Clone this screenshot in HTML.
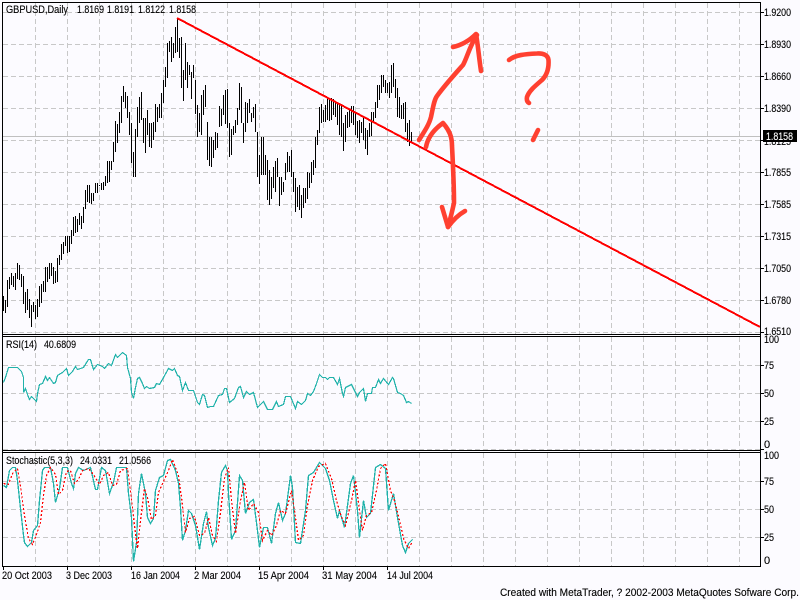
<!DOCTYPE html>
<html>
<head>
<meta charset="utf-8">
<style>
html,body{margin:0;padding:0;width:800px;height:600px;overflow:hidden;background:#fcfbff}
svg{display:block}
text{font-family:"Liberation Sans",sans-serif;font-size:11px;fill:#000;stroke:#000;stroke-width:.12}
.c{shape-rendering:crispEdges;fill:none}
</style>
</head>
<body>
<svg width="800" height="600" viewBox="0 0 800 600" xmlns="http://www.w3.org/2000/svg">
<rect width="800" height="600" fill="#fcfbff"/>

<!-- grid -->
<path class="c" stroke="#c8c8c8" stroke-dasharray="5 3" d="M3 12.5H760M3 44.5H760M3 76.5H760M3 108.5H760M3 140.5H760M3 172.5H760M3 204.5H760M3 236.5H760M3 268.5H760M3 300.5H760M3 332.5H760M3 365.5H760M3 393.5H760M3 421.5H760M3 449.5H760M3 481.5H760M3 509.5H760M3 537.5H760"/>
<path class="c" stroke="#c8c8c8" stroke-dasharray="5 3" d="M35.5 3V334M67.5 3V334M99.5 3V334M131.5 3V334M163.5 3V334M195.5 3V334M227.5 3V334M259.5 3V334M291.5 3V334M323.5 3V334M355.5 3V334M387.5 3V334M419.5 3V334M451.5 3V334M483.5 3V334M515.5 3V334M547.5 3V334M579.5 3V334M611.5 3V334M643.5 3V334M675.5 3V334M707.5 3V334M739.5 3V334
M35.5 337V450M67.5 337V450M99.5 337V450M131.5 337V450M163.5 337V450M195.5 337V450M227.5 337V450M259.5 337V450M291.5 337V450M323.5 337V450M355.5 337V450M387.5 337V450M419.5 337V450M451.5 337V450M483.5 337V450M515.5 337V450M547.5 337V450M579.5 337V450M611.5 337V450M643.5 337V450M675.5 337V450M707.5 337V450M739.5 337V450
M35.5 453V566M67.5 453V566M99.5 453V566M131.5 453V566M163.5 453V566M195.5 453V566M227.5 453V566M259.5 453V566M291.5 453V566M323.5 453V566M355.5 453V566M387.5 453V566M419.5 453V566M451.5 453V566M483.5 453V566M515.5 453V566M547.5 453V566M579.5 453V566M611.5 453V566M643.5 453V566M675.5 453V566M707.5 453V566M739.5 453V566"/>

<!-- current price line -->
<path class="c" stroke="#c0c0c0" d="M3 136.5H760"/>

<!-- price bars -->
<path class="c" stroke="#000" d="M3.5 296V311M5.5 300V313M7.5 280V307M9.5 277V289M11.5 273V285M13.5 276V287M15.5 273V290M17.5 263V279M19.5 265V280M21.5 274V287M23.5 276V304M25.5 292V313M27.5 289V310M29.5 299V318M31.5 305V327M33.5 302V312M35.5 305V319M37.5 299V317M39.5 286V307M41.5 284V303M43.5 281V292M45.5 267V292M47.5 267V282M49.5 263V279M51.5 263V276M53.5 267V284M55.5 271V283M57.5 258V282M59.5 255V265M61.5 244V260M63.5 242V254M65.5 236V246M67.5 236V253M69.5 236V252M71.5 230V244M73.5 217V236M75.5 216V233M77.5 219V232M79.5 213V225M81.5 216V229M83.5 207V223M85.5 190V209M87.5 185V202M89.5 185V203M91.5 193V204M93.5 193V201M95.5 183V193M97.5 183V193M99.5 185V186M101.5 183V190M103.5 182V190M105.5 176V186M107.5 161V183M109.5 161V182M111.5 161V170M113.5 142V162M115.5 121V152M117.5 124V143M119.5 112V133M121.5 96V123M123.5 86V102M125.5 92V108M127.5 96V118M129.5 112V135M131.5 123V163M133.5 152V177M135.5 129V177M137.5 107V137M139.5 97V123M141.5 92V120M143.5 118V143M145.5 118V153M147.5 110V135M149.5 123V147M151.5 123V148M153.5 122V140M155.5 104V132M157.5 107V122M159.5 104V118M161.5 93V118M163.5 80V103M165.5 67V87M167.5 43V78M169.5 41V52M171.5 37V62M173.5 43V58M175.5 27V53M177.5 18V52M179.5 38V58M181.5 37V88M183.5 70V101M185.5 43V80M187.5 62V88M189.5 65V75M191.5 72V99M193.5 65V78M195.5 80V114M197.5 105V137M199.5 113V132M201.5 95V135M203.5 90V115M205.5 85V107M207.5 122V160M209.5 137V166M211.5 137V167M213.5 140V158M215.5 132V150M217.5 133V148M219.5 106V127M221.5 109V126M223.5 95V115M225.5 90V124M227.5 89V128M229.5 123V157M231.5 129V155M233.5 126V135M235.5 120V133M237.5 108V125M239.5 83V110M241.5 87V123M243.5 123V143M245.5 102V132M247.5 103V123M249.5 99V113M251.5 113V122M253.5 107V118M255.5 104V132M257.5 132V177M259.5 155V184M261.5 137V175M263.5 137V175M265.5 155V175M267.5 160V200M269.5 170V205M271.5 177V199M273.5 167V188M275.5 161V192M277.5 158V177M279.5 177V206M281.5 177V195M283.5 182V192M285.5 163V180M287.5 152V172M289.5 156V172M291.5 150V177M293.5 172V192M295.5 178V212M297.5 187V207M299.5 185V210M301.5 195V218M303.5 188V208M305.5 188V203M307.5 172V199M309.5 173V188M311.5 162V183M313.5 160V175M315.5 137V168M317.5 130V145M319.5 107V133M321.5 104V123M323.5 110V122M325.5 105V122M327.5 97V120M329.5 100V121M331.5 98V120M333.5 99V115M335.5 102V117M337.5 103V125M339.5 103V135M341.5 105V137M343.5 123V151M345.5 115V142M347.5 112V128M349.5 110V127M351.5 106V123M353.5 106V125M355.5 113V135M357.5 121V138M359.5 120V143M361.5 122V133M363.5 118V140M365.5 128V149M367.5 130V155M369.5 123V137M371.5 112V136M373.5 112V122M375.5 102V118M377.5 85V108M379.5 85V100M381.5 75V93M383.5 75V87M385.5 80V93M387.5 83V93M389.5 82V98M391.5 65V93M393.5 63V87M395.5 79V98M397.5 88V117M399.5 97V118M401.5 105V119M403.5 103V119M405.5 102V132M407.5 123V142M409.5 120V146M411.5 132V142"/>

<!-- trend line -->
<line x1="177" y1="18" x2="760" y2="327" stroke="#ff0000" stroke-width="2" class="c"/>

<!-- hand drawn -->
<g fill="none" stroke="#ff4030" stroke-width="4.6" stroke-linecap="round" stroke-linejoin="round">
<path d="M419 140C424 132 429 125 431 117C433 108 434 100 437 96C445 85 455 74 463 65C467 58 470 45 477 35"/>
<path d="M453 47C462 45 470 40 476 34C478 45 479 58 481 71"/>
<path d="M426 147C428 136 436 128 443 123C449 130 452 136 452 146C453 165 454 185 454 203C452 212 450 220 448 227"/>
<path d="M442 207L448 227C453 220 458 215 465 211"/>
<path d="M509 60C515 55 525 54 537 53.5C543 53 548 55 548.5 60C549 68 547 75 542 80C535 86 529 91 527 97C526.5 100 527 102 529 103"/>
<path d="M538 130L533 140"/>
</g>

<!-- RSI -->
<polyline class="c" stroke="#20b2aa" stroke-width="1.2" transform="translate(.5 .5)" points="3,382 5,377 8,367 17,367 21,371 23,377 23,392 25,388 27,394 29,399 31,396 33,398 36,401 37,393 39,384 42,383 45,376 47,380 49,377 53,383 55,382 57,375 62,372 66,368 68,375 72,371 75,366 77,369 83,367 88,359 90,359 93,369 97,364 102,366 104,368 108,363 111,365 115,354 117,357 122,352 126,355 127,367 130,378 131,392 133,398 135,387 137,378 139,377 142,383 144,388 146,386 149,388 154,387 156,383 159,384 163,377 168,368 172,370 174,368 177,375 179,376 182,390 185,382 188,390 193,390 197,402 199,404 202,394 204,395 207,407 210,406 213,406 218,395 222,394 224,388 226,388 229,402 234,398 238,387 240,386 243,397 246,391 249,394 253,392 257,407 263,401 267,409 272,409 276,401 278,406 283,404 285,396 290,396 295,408 297,401 301,404 305,400 307,393 310,395 313,391 316,383 319,374 322,377 325,377 327,379 329,377 333,377 337,384 339,378 342,393 343,396 345,387 351,384 357,396 359,392 363,388 365,401 367,393 371,393 372,387 375,387 378,379 380,383 383,378 388,384 392,377 393,378 397,392 400,393 403,395 406,402 408,401 411,403"/>

<!-- Stochastic -->
<polyline class="c" stroke="#20b2aa" stroke-width="1.3" transform="translate(.5 .5)" points="3,485 6,487 9,470 12,467 15,467 17,480 20,508 23,535 24,542 27,546 31,542 33,530 37,525 39,500 42,470 44,467 50,467 53,483 55,502 59,488 62,467 67,467 71,483 73,488 75,473 78,467 83,470 90,467 95,489 97,489 101,467 105,470 109,493 113,482 116,467 126,467 128,493 131,517 133,561 136,542 138,493 141,473 143,483 145,493 147,517 150,523 153,518 155,490 159,477 163,475 167,460 170,459 175,470 178,483 180,507 182,540 185,530 188,510 191,513 195,525 199,549 203,523 206,511 208,527 212,545 215,538 218,500 221,472 225,465 227,470 228,493 231,539 235,530 239,475 242,480 245,513 249,502 253,499 257,530 259,547 263,527 267,527 271,543 275,513 278,502 282,520 285,513 290,475 292,487 295,542 300,543 305,510 308,475 313,472 319,462 325,468 329,480 333,500 337,518 339,510 344,527 350,483 353,475 357,510 359,537 363,500 366,517 370,513 375,467 380,464 385,468 388,510 393,493 397,517 402,545 405,552 408,543 412,539"/>
<polyline class="c" stroke="#ff0000" stroke-width="1.2" stroke-dasharray="2 2" transform="translate(.5 .5)" points="3,483 8,484 12,473 17,468 20,486 24,515 28,538 32,544 36,534 40,522 43,495 46,475 50,467 55,474 58,494 62,490 66,471 70,470 74,483 78,479 82,470 88,468 93,474 99,484 103,475 108,472 112,485 116,484 120,470 127,468 130,490 134,525 137,548 140,520 144,488 147,497 151,519 155,515 158,492 163,481 168,470 172,459 178,475 181,497 185,532 189,518 194,516 199,535 204,533 208,517 212,535 216,541 220,512 224,478 228,467 231,500 235,533 240,500 244,482 248,510 253,503 258,512 262,540 267,530 271,535 276,525 280,510 285,513 291,490 294,510 298,540 303,535 307,505 312,480 318,466 325,463 331,478 336,500 340,514 345,525 351,500 355,480 359,510 362,530 366,515 371,512 376,490 380,468 385,463 390,490 394,500 399,520 403,538 408,548 412,541"/>

<!-- frame -->
<path class="c" stroke="#000" d="M2.5 2V567M2 2.5H761M760.5 2V567M2 334.5H761M2 336.5H761M2 450.5H761M2 452.5H761M2 566.5H761"/>
<!-- right ticks -->
<path class="c" stroke="#000" d="M761 12.5H764M761 44.5H764M761 76.5H764M761 108.5H764M761 140.5H764M761 172.5H764M761 204.5H764M761 236.5H764M761 268.5H764M761 300.5H764M761 332.5H764M761 365.5H764M761 393.5H764M761 421.5H764M761 449.5H764M761 481.5H764M761 509.5H764M761 537.5H764"/>
<!-- bottom ticks -->
<path class="c" stroke="#000" d="M3.5 567V570M67.5 567V570M131.5 567V570M195.5 567V570M259.5 567V570M323.5 567V570M387.5 567V570"/>

<!-- price labels -->
<text x="764" y="16" textLength="27" lengthAdjust="spacingAndGlyphs">1.9200</text>
<text x="764" y="48" textLength="27" lengthAdjust="spacingAndGlyphs">1.8930</text>
<text x="764" y="80" textLength="27" lengthAdjust="spacingAndGlyphs">1.8660</text>
<text x="764" y="112" textLength="27" lengthAdjust="spacingAndGlyphs">1.8390</text>
<text x="764" y="145" textLength="27" lengthAdjust="spacingAndGlyphs">1.8125</text>
<text x="764" y="176" textLength="27" lengthAdjust="spacingAndGlyphs">1.7855</text>
<text x="764" y="208" textLength="27" lengthAdjust="spacingAndGlyphs">1.7585</text>
<text x="764" y="240" textLength="27" lengthAdjust="spacingAndGlyphs">1.7315</text>
<text x="764" y="272" textLength="27" lengthAdjust="spacingAndGlyphs">1.7050</text>
<text x="764" y="304" textLength="27" lengthAdjust="spacingAndGlyphs">1.6780</text>
<text x="764" y="335" textLength="27" lengthAdjust="spacingAndGlyphs">1.6510</text>
<rect x="763" y="130" width="34" height="12" fill="#000"/>
<text x="766" y="140" textLength="27" lengthAdjust="spacingAndGlyphs" style="fill:#fff;stroke:#fff">1.8158</text>

<!-- indicator scale -->
<text x="764" y="343" textLength="15" lengthAdjust="spacingAndGlyphs">100</text>
<text x="764" y="369" textLength="10" lengthAdjust="spacingAndGlyphs">75</text>
<text x="764" y="397" textLength="10" lengthAdjust="spacingAndGlyphs">50</text>
<text x="764" y="425" textLength="10" lengthAdjust="spacingAndGlyphs">25</text>
<text x="764" y="448">0</text>
<text x="764" y="459" textLength="15" lengthAdjust="spacingAndGlyphs">100</text>
<text x="764" y="485" textLength="10" lengthAdjust="spacingAndGlyphs">75</text>
<text x="764" y="513" textLength="10" lengthAdjust="spacingAndGlyphs">50</text>
<text x="764" y="541" textLength="10" lengthAdjust="spacingAndGlyphs">25</text>
<text x="764" y="564">0</text>

<!-- legends -->
<text x="6" y="13" textLength="62" lengthAdjust="spacingAndGlyphs">GBPUSD,Daily</text>
<text x="77" y="13" textLength="27" lengthAdjust="spacingAndGlyphs">1.8169</text>
<text x="107" y="13" textLength="27" lengthAdjust="spacingAndGlyphs">1.8191</text>
<text x="138" y="13" textLength="27" lengthAdjust="spacingAndGlyphs">1.8122</text>
<text x="169" y="13" textLength="27" lengthAdjust="spacingAndGlyphs">1.8158</text>
<text x="6" y="348" textLength="31" lengthAdjust="spacingAndGlyphs">RSI(14)</text>
<text x="44" y="348" textLength="32" lengthAdjust="spacingAndGlyphs">40.6809</text>
<text x="6" y="464" textLength="67" lengthAdjust="spacingAndGlyphs">Stochastic(5,3,3)</text>
<text x="80" y="464" textLength="32" lengthAdjust="spacingAndGlyphs">24.0331</text>
<text x="119" y="464" textLength="32" lengthAdjust="spacingAndGlyphs">21.0566</text>

<!-- date axis -->
<text x="2" y="579" textLength="50" lengthAdjust="spacingAndGlyphs">20 Oct 2003</text>
<text x="66" y="579" textLength="46" lengthAdjust="spacingAndGlyphs">3 Dec 2003</text>
<text x="131" y="579" textLength="49" lengthAdjust="spacingAndGlyphs">16 Jan 2004</text>
<text x="194" y="579" textLength="47" lengthAdjust="spacingAndGlyphs">2 Mar 2004</text>
<text x="258" y="579" textLength="51" lengthAdjust="spacingAndGlyphs">15 Apr 2004</text>
<text x="322" y="579" textLength="55" lengthAdjust="spacingAndGlyphs">31 May 2004</text>
<text x="387" y="579" textLength="46" lengthAdjust="spacingAndGlyphs">14 Jul 2004</text>

<!-- footer -->
<text x="500" y="596" textLength="299" lengthAdjust="spacingAndGlyphs">Created with MetaTrader, ? 2002-2003 MetaQuotes Sofware Corp.</text>
</svg>
</body>
</html>
